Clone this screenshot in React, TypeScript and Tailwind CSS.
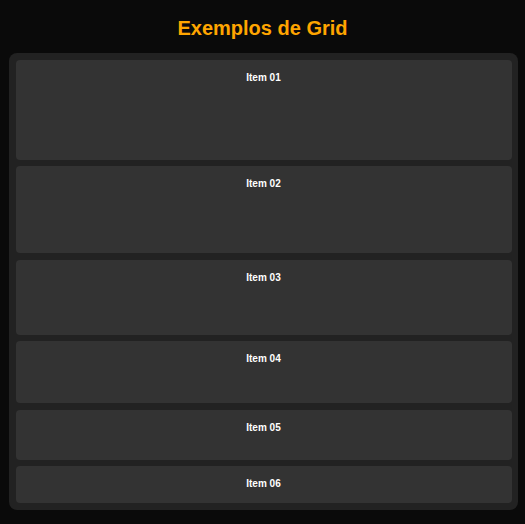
export default function App() {
  const items = [
    { label: "Item 01", h: "h-[100px]" },
    { label: "Item 02", h: "h-[87px]" },
    { label: "Item 03", h: "h-[75px]" },
    { label: "Item 04", h: "h-[62px]" },
    { label: "Item 05", h: "h-[50px]" },
    { label: "Item 06", h: "h-[37px]" },
  ];
  return (
    <div className="min-h-[524px] bg-[#0a0a0a] font-['Liberation_Sans',Arial,sans-serif] pt-[17px] pb-[14px]">
      <h1 className="text-center text-[20px] leading-[23px] font-bold text-[#ffa500] mb-[13px]">Exemplos de Grid</h1>
      <div className="ml-[9px] mr-[7px] bg-[#222222] rounded-[8px] p-[6.5px] flex flex-col gap-[6.5px]">
        {items.map(({ label, h }) => (
          <div key={label} className={`${h} bg-[#333333] rounded-[4px] pt-[12px] text-center text-white text-[10px] leading-[11px] font-bold`}>
            {label}
          </div>
        ))}
      </div>
    </div>
  );
}
